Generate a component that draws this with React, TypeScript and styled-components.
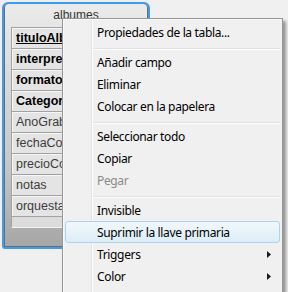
import React from 'react';
import styled, { createGlobalStyle, css } from 'styled-components';

const GlobalStyle = createGlobalStyle`
  html, body { margin: 0; padding: 0; background: #f0f0f0; }
  body { font-family: "Noto Sans", "Open Sans", sans-serif; }
`;

const Desktop = styled.div`
  position: relative;
  width: 288px;
  height: 292px;
  overflow: hidden;
  background: #f0f0f0;
  padding: 2px 0 0 2px;
  box-sizing: border-box;
`;

const TableWindow = styled.div`
  width: 148px;
  height: 247px;
  box-sizing: border-box;
  border: 2px solid #3d9cf2;
  border-radius: 6px 6px 3px 3px;
  background: linear-gradient(#ebebeb 0%, #dadada 30%, #c8c8c8 65%, #a6a6a6 100%);
  box-shadow: inset 1px 0 0 #6b6b6b, inset 0 -1px 0 #6b6b6b, inset -1px 0 0 #6b6b6b;
  display: flex;
  flex-direction: column;
  overflow: hidden;
  font-family: "Liberation Sans", Arial, sans-serif;
  font-size: 12px;
`;

const TableTitle = styled.div`
  height: 23px;
  line-height: 23px;
  text-align: center;
  color: #353535;
  flex: none;
`;

const FieldList = styled.div`
  margin: 0 8px 0 7px;
  display: flex;
  flex-direction: column;
`;

const FieldRow = styled.div<{ $key?: boolean; $bold?: boolean }>`
  height: 21px;
  box-sizing: border-box;
  border-top: 1px solid #a2a2a2;
  border-left: 1px solid #a2a2a2;
  background: #e4e4e4;
  box-shadow: inset 1px 1px 0 #f6f6f6;
  padding: 1px 0 0 4px;
  line-height: 19px;
  font-size: 12.5px;
  white-space: nowrap;
  overflow: hidden;
  color: ${(p) => (p.$bold ? '#000' : '#3c3c3c')};
  font-weight: ${(p) => (p.$bold ? 700 : 400)};
  text-decoration: ${(p) => (p.$key ? 'underline' : 'none')};
`;

const FieldFiller = styled.div`
  height: 12px;
  box-sizing: border-box;
  border-top: 1px solid #a2a2a2;
  border-left: 1px solid #a2a2a2;
  border-bottom: 1px solid #f2f2f2;
  background: #dcdcdc;
`;

const ContextMenu = styled.div`
  position: absolute;
  left: 62px;
  top: 18px;
  width: 221px;
  height: 290px;
  box-sizing: border-box;
  border: 1px solid #979797;
  padding: 2px;
  background:
    linear-gradient(to right, transparent 28px, #e2e3e3 28px, #e2e3e3 29px, #ffffff 29px, #ffffff 30px, transparent 30px),
    #f0f0f0;
  box-shadow: 3px 3px 3px rgba(0, 0, 0, 0.38), inset 1px 1px 0 #f8f8f8;
  display: flex;
  flex-direction: column;
  font-family: "Noto Sans", "Open Sans", sans-serif;
  font-size: 12px;
  letter-spacing: -0.35px;
`;

const MenuItem = styled.div<{ $disabled?: boolean; $active?: boolean }>`
  height: 22px;
  flex: none;
  box-sizing: border-box;
  display: flex;
  align-items: center;
  padding: 0 8px 0 31px;
  border: 1px solid transparent;
  border-radius: 3px;
  color: ${(p) => (p.$disabled ? '#8a8a8a' : '#000')};
  white-space: nowrap;
  ${(p) =>
    p.$active &&
    css`
      border-color: #a9d6ec;
      background: linear-gradient(#f1f8fc, #dcedf7);
    `}
`;

const MenuSeparator = styled.div`
  height: 8px;
  flex: none;
  box-sizing: border-box;
  margin-left: 28px;
  padding-top: 5px;
  &::before {
    content: '';
    display: block;
    height: 1px;
    background: #e0e0e0;
    border-bottom: 1px solid #ffffff;
  }
`;

const SubArrow = styled.svg`
  margin-left: auto;
  width: 4px;
  height: 7px;
  flex: none;
`;

type Entry = { label: string; disabled?: boolean; active?: boolean; submenu?: boolean } | 'sep';

const entries: Entry[] = [
  { label: 'Propiedades de la tabla...' },
  'sep',
  { label: 'Añadir campo' },
  { label: 'Eliminar' },
  { label: 'Colocar en la papelera' },
  'sep',
  { label: 'Seleccionar todo' },
  { label: 'Copiar' },
  { label: 'Pegar', disabled: true },
  'sep',
  { label: 'Invisible' },
  { label: 'Suprimir la llave primaria', active: true },
  { label: 'Triggers', submenu: true },
  { label: 'Color', submenu: true },
];

const fields = [
  { name: 'tituloAlbum', key: true, bold: true },
  { name: 'interprete', bold: true },
  { name: 'formato', bold: true },
  { name: 'Categoria', bold: true },
  { name: 'AnoGrabacion' },
  { name: 'fechaCompra' },
  { name: 'precioCompra' },
  { name: 'notas' },
  { name: 'orquesta' },
];

export default function App() {
  return (
    <>
      <GlobalStyle />
      <Desktop>
        <TableWindow>
          <TableTitle>albumes</TableTitle>
          <FieldList>
            {fields.map((f) => (
              <FieldRow key={f.name} $key={f.key} $bold={f.bold}>
                {f.name}
              </FieldRow>
            ))}
            <FieldFiller />
          </FieldList>
        </TableWindow>
        <ContextMenu>
          {entries.map((e, i) =>
            e === 'sep' ? (
              <MenuSeparator key={i} />
            ) : (
              <MenuItem key={i} $disabled={e.disabled} $active={e.active}>
                {e.label}
                {e.submenu && (
                  <SubArrow viewBox="0 0 4 7">
                    <polygon points="0,0 4,3.5 0,7" fill="#1a1a1a" />
                  </SubArrow>
                )}
              </MenuItem>
            )
          )}
        </ContextMenu>
      </Desktop>
    </>
  );
}
